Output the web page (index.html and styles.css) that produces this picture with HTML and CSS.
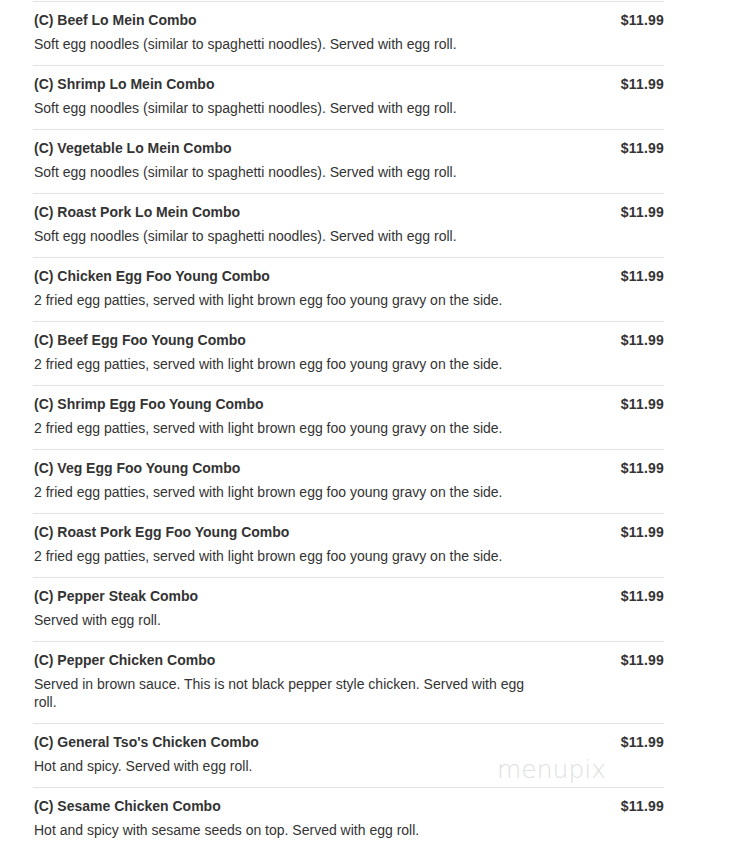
FILE: index.html
```html
<!DOCTYPE html>
<html>
<head>
<meta charset="utf-8">
<link rel="stylesheet" href="styles.css">
</head>
<body>
<div class="menu">
  <div class="item"><div class="info"><div class="name">(C) Beef Lo Mein Combo</div><div class="desc">Soft egg noodles (similar to spaghetti noodles). Served with egg roll.</div></div><div class="price">$11.99</div></div>
  <div class="item"><div class="info"><div class="name">(C) Shrimp Lo Mein Combo</div><div class="desc">Soft egg noodles (similar to spaghetti noodles). Served with egg roll.</div></div><div class="price">$11.99</div></div>
  <div class="item"><div class="info"><div class="name">(C) Vegetable Lo Mein Combo</div><div class="desc">Soft egg noodles (similar to spaghetti noodles). Served with egg roll.</div></div><div class="price">$11.99</div></div>
  <div class="item"><div class="info"><div class="name">(C) Roast Pork Lo Mein Combo</div><div class="desc">Soft egg noodles (similar to spaghetti noodles). Served with egg roll.</div></div><div class="price">$11.99</div></div>
  <div class="item"><div class="info"><div class="name">(C) Chicken Egg Foo Young Combo</div><div class="desc">2 fried egg patties, served with light brown egg foo young gravy on the side.</div></div><div class="price">$11.99</div></div>
  <div class="item"><div class="info"><div class="name">(C) Beef Egg Foo Young Combo</div><div class="desc">2 fried egg patties, served with light brown egg foo young gravy on the side.</div></div><div class="price">$11.99</div></div>
  <div class="item"><div class="info"><div class="name">(C) Shrimp Egg Foo Young Combo</div><div class="desc">2 fried egg patties, served with light brown egg foo young gravy on the side.</div></div><div class="price">$11.99</div></div>
  <div class="item"><div class="info"><div class="name">(C) Veg Egg Foo Young Combo</div><div class="desc">2 fried egg patties, served with light brown egg foo young gravy on the side.</div></div><div class="price">$11.99</div></div>
  <div class="item"><div class="info"><div class="name">(C) Roast Pork Egg Foo Young Combo</div><div class="desc">2 fried egg patties, served with light brown egg foo young gravy on the side.</div></div><div class="price">$11.99</div></div>
  <div class="item"><div class="info"><div class="name">(C) Pepper Steak Combo</div><div class="desc">Served with egg roll.</div></div><div class="price">$11.99</div></div>
  <div class="item"><div class="info"><div class="name">(C) Pepper Chicken Combo</div><div class="desc">Served in brown sauce. This is not black pepper style chicken. Served with egg roll.</div></div><div class="price">$11.99</div></div>
  <div class="item wm-host"><div class="info"><div class="name">(C) General Tso's Chicken Combo</div><div class="desc">Hot and spicy. Served with egg roll.</div></div><div class="price">$11.99</div><div class="watermark">menupix</div></div>
  <div class="item"><div class="info"><div class="name">(C) Sesame Chicken Combo</div><div class="desc">Hot and spicy with sesame seeds on top. Served with egg roll.</div></div><div class="price">$11.99</div></div>
</div>
</body>
</html>
```
FILE: styles.css
```css
html, body {
  margin: 0;
  padding: 0;
  background: #fff;
}
body {
  font-family: "Liberation Sans", Arial, sans-serif;
  color: #333;
}
.menu {
  width: 631px;
  margin-left: 33px;
}
.item {
  display: flex;
  border-top: 1px solid #e3e3e3;
  padding: 8px 0 12px 1px;
}
.menu > .item:first-child {
  margin-top: 1px;
}
.info {
  flex: 1;
  padding-right: 95px;
}
.name {
  font-size: 14px;
  font-weight: bold;
  line-height: 20px;
}
.desc {
  font-size: 14px;
  line-height: 18px;
  margin-top: 5px;
}
.price {
  font-size: 14px;
  font-weight: bold;
  line-height: 20px;
  letter-spacing: 0.2px;
}
.wm-host {
  position: relative;
}
.watermark {
  position: absolute;
  left: 464px;
  top: 31px;
  font-family: "DejaVu Sans", sans-serif;
  font-weight: 200;
  font-size: 25px;
  color: #e0e0e0;
}
```
